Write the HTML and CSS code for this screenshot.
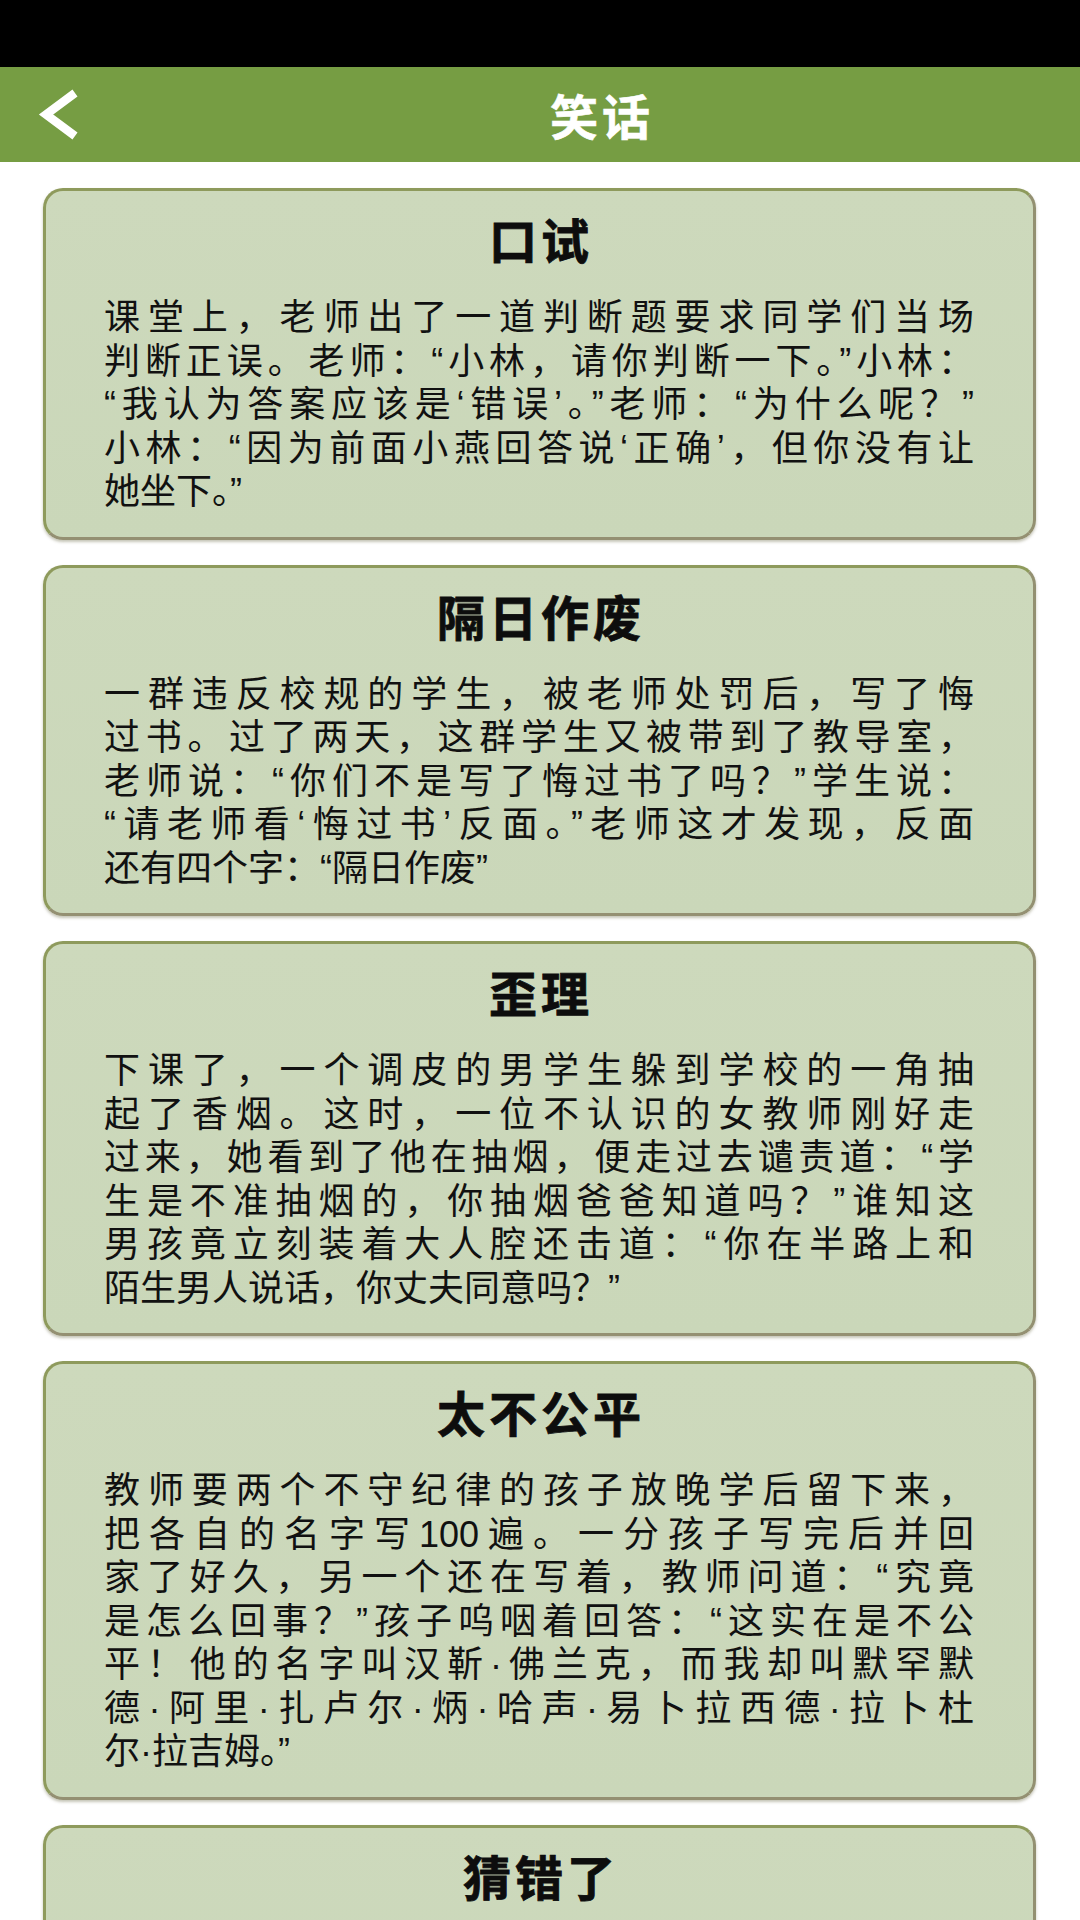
FILE: index.html
```html
<!DOCTYPE html>
<html lang="zh-CN">
<head>
<meta charset="utf-8">
<title>笑话</title>
<link rel="stylesheet" href="styles.css">
</head>
<body>
<div class="status"></div>
<header class="bar">
  <div class="back">
    <svg class="back-icon" width="48" height="56" viewBox="0 0 48 56">
      <polyline points="38,6 9,27.5 38,49" fill="none" stroke="#ffffff" stroke-width="8.5" stroke-linejoin="miter"/>
    </svg>
  </div>
  <h1 class="title">笑话</h1>
</header>
<main class="list">
  <section class="card">
    <h2 class="card-title">口试</h2>
    <div class="text">
      <span class="ln">课堂上，老师出了一道判断题要求同学们当场</span>
      <span class="ln">判断正误。老师：“小林，请你判断一下。”小林：</span>
      <span class="ln">“我认为答案应该是‘错误’。”老师：“为什么呢？”</span>
      <span class="ln">小林：“因为前面小燕回答说‘正确’，但你没有让</span>
      <span class="ln last">她坐下。”</span>
    </div>
  </section>
  <section class="card">
    <h2 class="card-title">隔日作废</h2>
    <div class="text">
      <span class="ln">一群违反校规的学生，被老师处罚后，写了悔</span>
      <span class="ln">过书。过了两天，这群学生又被带到了教导室，</span>
      <span class="ln">老师说：“你们不是写了悔过书了吗？”学生说：</span>
      <span class="ln">“请老师看‘悔过书’反面。”老师这才发现，反面</span>
      <span class="ln last">还有四个字：“隔日作废”</span>
    </div>
  </section>
  <section class="card">
    <h2 class="card-title">歪理</h2>
    <div class="text">
      <span class="ln">下课了，一个调皮的男学生躲到学校的一角抽</span>
      <span class="ln">起了香烟。这时，一位不认识的女教师刚好走</span>
      <span class="ln">过来，她看到了他在抽烟，便走过去谴责道：“学</span>
      <span class="ln">生是不准抽烟的，你抽烟爸爸知道吗？”谁知这</span>
      <span class="ln">男孩竟立刻装着大人腔还击道：“你在半路上和</span>
      <span class="ln last">陌生男人说话，你丈夫同意吗？”</span>
    </div>
  </section>
  <section class="card">
    <h2 class="card-title">太不公平</h2>
    <div class="text">
      <span class="ln">教师要两个不守纪律的孩子放晚学后留下来，</span>
      <span class="ln">把各自的名字写100遍。一分孩子写完后并回</span>
      <span class="ln">家了好久，另一个还在写着，教师问道：“究竟</span>
      <span class="ln">是怎么回事？”孩子呜咽着回答：“这实在是不公</span>
      <span class="ln">平！他的名字叫汉靳·佛兰克，而我却叫默罕默</span>
      <span class="ln">德·阿里·扎卢尔·炳·哈声·易卜拉西德·拉卜杜</span>
      <span class="ln last">尔·拉吉姆。”</span>
    </div>
  </section>
  <section class="card card-tail">
    <h2 class="card-title">猜错了</h2>
  </section>
</main>
</body>
</html>
```

FILE: styles.css
```css
* {
  box-sizing: border-box;
}

html, body {
  margin: 0;
  padding: 0;
  background: #ffffff;
}

body {
  width: 1080px;
  height: 1920px;
  overflow: hidden;
  font-family: "Liberation Sans", "Noto Sans CJK SC", sans-serif;
  color: #111111;
}

.status {
  height: 67px;
  background: #000000;
}

.bar {
  height: 95px;
  background: #769d43;
  display: flex;
  align-items: center;
}

.back {
  width: 120px;
  height: 95px;
  display: flex;
  align-items: center;
  padding-left: 37px;
}

.back-icon {
  display: block;
}

.title {
  flex: 1;
  margin: 0;
  text-align: center;
  color: #ffffff;
  font-family: "Noto Sans CJK SC", sans-serif;
  font-weight: 700;
  font-size: 48px;
  letter-spacing: 4px;
  text-indent: 4px;
  line-height: 95px;
  -webkit-text-stroke: 0.6px #ffffff;
}

.list {
  display: flex;
  flex-direction: column;
  gap: 25px;
  padding: 26px 44px 0 43px;
}

.card {
  border: 3px solid #8e9a5c;
  border-right-color: #939071;
  border-bottom-color: #949072;
  border-radius: 20px;
  background: linear-gradient(180deg, #cdd9bc 0%, #cad7b9 100%);
  box-shadow: 0 2px 3px rgba(90, 90, 50, 0.35);
  padding: 17px 59px 23px 58px;
}

.card-tail {
  min-height: 240px;
}

.card-title {
  margin: 0 0 28px 0;
  height: 60px;
  line-height: 60px;
  text-align: center;
  font-family: "Noto Sans CJK SC", sans-serif;
  font-weight: 700;
  font-size: 48px;
  letter-spacing: 4px;
  text-indent: 4px;
  color: #0d0d0d;
  -webkit-text-stroke: 0.8px #0d0d0d;
}

.text {
  font-size: 36px;
  line-height: 43.5px;
}

.ln {
  display: block;
  white-space: nowrap;
  text-align: justify;
  text-align-last: justify;
}

.ln.last {
  text-align-last: left;
}
```
